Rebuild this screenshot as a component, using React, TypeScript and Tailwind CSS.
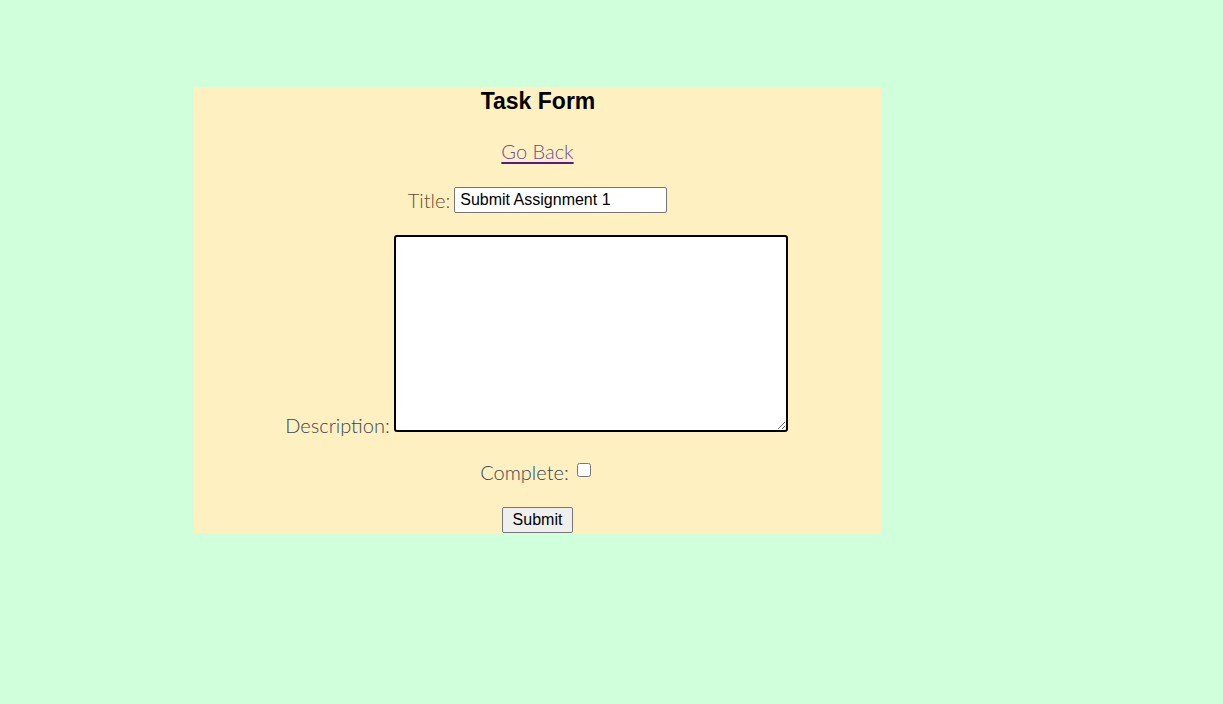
import React, { useState } from 'react';

export default function App() {
  const [title, setTitle] = useState('Submit Assignment 1');
  const [desc, setDesc] = useState('');
  const [done, setDone] = useState(false);

  return (
    <div className="min-h-[704px] w-full bg-[#d0ffdc] pt-[87px] pl-[194px]">
      <div className="w-[687px] h-[446px] bg-[#fef0c0] flex flex-col items-center">
        <h2 className="text-[23px] leading-[28px] font-bold text-black font-['Liberation_Sans',Arial,sans-serif] ml-[1px]">
          Task Form
        </h2>

        <a
          href="#"
          className="mt-[22px] text-[20px] leading-[28px] font-light text-[#6b4c9a] underline decoration-[#551a8b] decoration-2 underline-offset-[3px] font-['Lato','Open_Sans',sans-serif]"
        >
          Go Back
        </a>

        {/* Title */}
        <div className="mt-[22px] flex items-center gap-[4px] h-[26px]">
          <label className="text-[20px] font-light text-[#6a4a30] font-['Lato','Open_Sans',sans-serif]">Title:</label>
          <input
            value={title}
            onChange={e => setTitle(e.target.value)}
            className="w-[213px] h-[26px] bg-white border border-[#767676] rounded-[2px] px-[5px] text-[16px] text-black font-['Liberation_Sans',Arial,sans-serif] outline-none"
          />
        </div>

        {/* Description */}
        <div className="mt-[22px] flex items-end gap-[4px] mr-[2px]">
          <label className="text-[20px] leading-[20px] mb-[-3px] font-light text-[#3a4550] font-['Lato','Open_Sans',sans-serif]">Description:</label>
          <textarea
            value={desc}
            onChange={e => setDesc(e.target.value)}
            className="w-[394px] h-[197px] bg-white border-2 border-black rounded-[3px] outline-none block"
          />
        </div>

        {/* Complete */}
        <div className="mt-[26px] flex items-center gap-[8px] h-[28px] mr-[4px]">
          <label className="text-[20px] font-light text-[#3a4550] font-['Lato','Open_Sans',sans-serif]">Complete:</label>
          <input
            type="checkbox"
            checked={done}
            onChange={e => setDone(e.target.checked)}
            className="w-[14px] h-[14px] mt-[-4px]"
          />
        </div>

        <button className="mt-[21px] h-[26px] px-[10px] bg-[#efefef] border border-[#767676] rounded-[2px] text-[16px] text-black font-['Liberation_Sans',Arial,sans-serif]">
          Submit
        </button>
      </div>
    </div>
  );
}
